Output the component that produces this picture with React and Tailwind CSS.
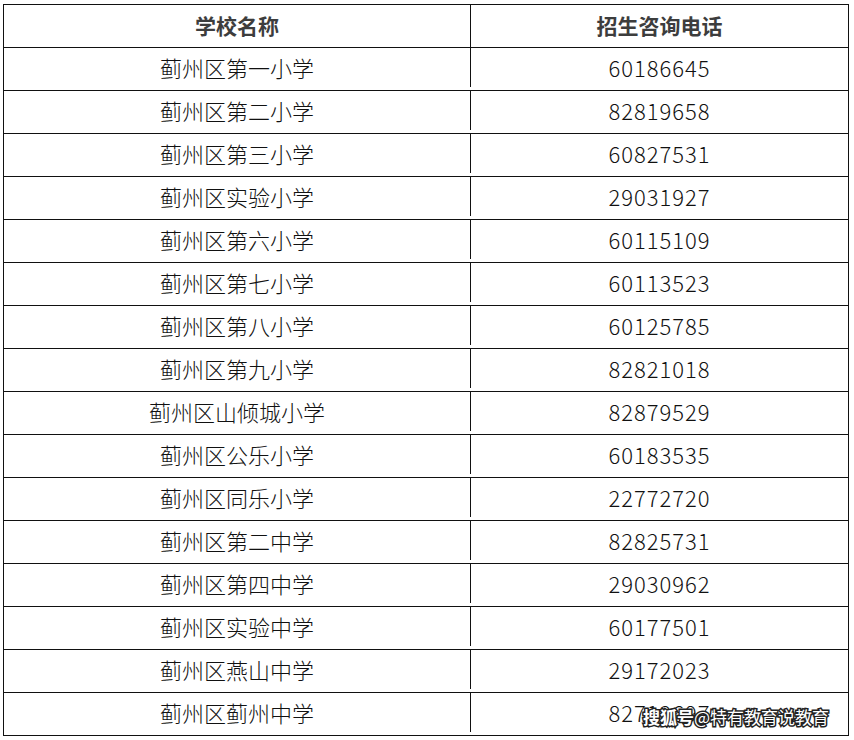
const rows = [
  ["蓟州区第一小学", "60186645"],
  ["蓟州区第二小学", "82819658"],
  ["蓟州区第三小学", "60827531"],
  ["蓟州区实验小学", "29031927"],
  ["蓟州区第六小学", "60115109"],
  ["蓟州区第七小学", "60113523"],
  ["蓟州区第八小学", "60125785"],
  ["蓟州区第九小学", "82821018"],
  ["蓟州区山倾城小学", "82879529"],
  ["蓟州区公乐小学", "60183535"],
  ["蓟州区同乐小学", "22772720"],
  ["蓟州区第二中学", "82825731"],
  ["蓟州区第四中学", "29030962"],
  ["蓟州区实验中学", "60177501"],
  ["蓟州区燕山中学", "29172023"],
  ["蓟州区蓟州中学", "82712697"],
];

const font = "font-['Microsoft_YaHei','Noto_Sans_CJK_SC',sans-serif]";

function Row({ left, right, head }) {
  const text = head
    ? "text-[21px] font-bold text-[#3d3d3d]"
    : "text-[22px] font-light text-[#111] pb-[3px]";
  return (
    <div className={`grid h-[43px] grid-cols-[467px_1fr] border-b border-[#111] ${text}`}>
      <div className="flex items-center justify-center border-r border-[#111]">{left}</div>
      <div className={`flex items-center justify-center ${head ? "" : "tracking-[1px]"}`}>{right}</div>
    </div>
  );
}

export default function App() {
  return (
    <div className={`relative h-[740px] w-[854px] overflow-hidden bg-white pl-[3px] pt-[4px] ${font}`}>
      <div className="w-[846px] border-x border-t border-[#111]">
        <Row head left="学校名称" right="招生咨询电话" />
        {rows.map(([name, tel]) => (
          <Row key={name} left={name} right={tel} />
        ))}
      </div>

      {/* watermark */}
      <div className="absolute left-[643px] top-[703px] text-[17px] leading-[28px] text-white [paint-order:stroke_fill] [-webkit-text-stroke:3px_#222]">
        <span className="font-bold">搜狐号</span>@特有教育说教育
      </div>
    </div>
  );
}
